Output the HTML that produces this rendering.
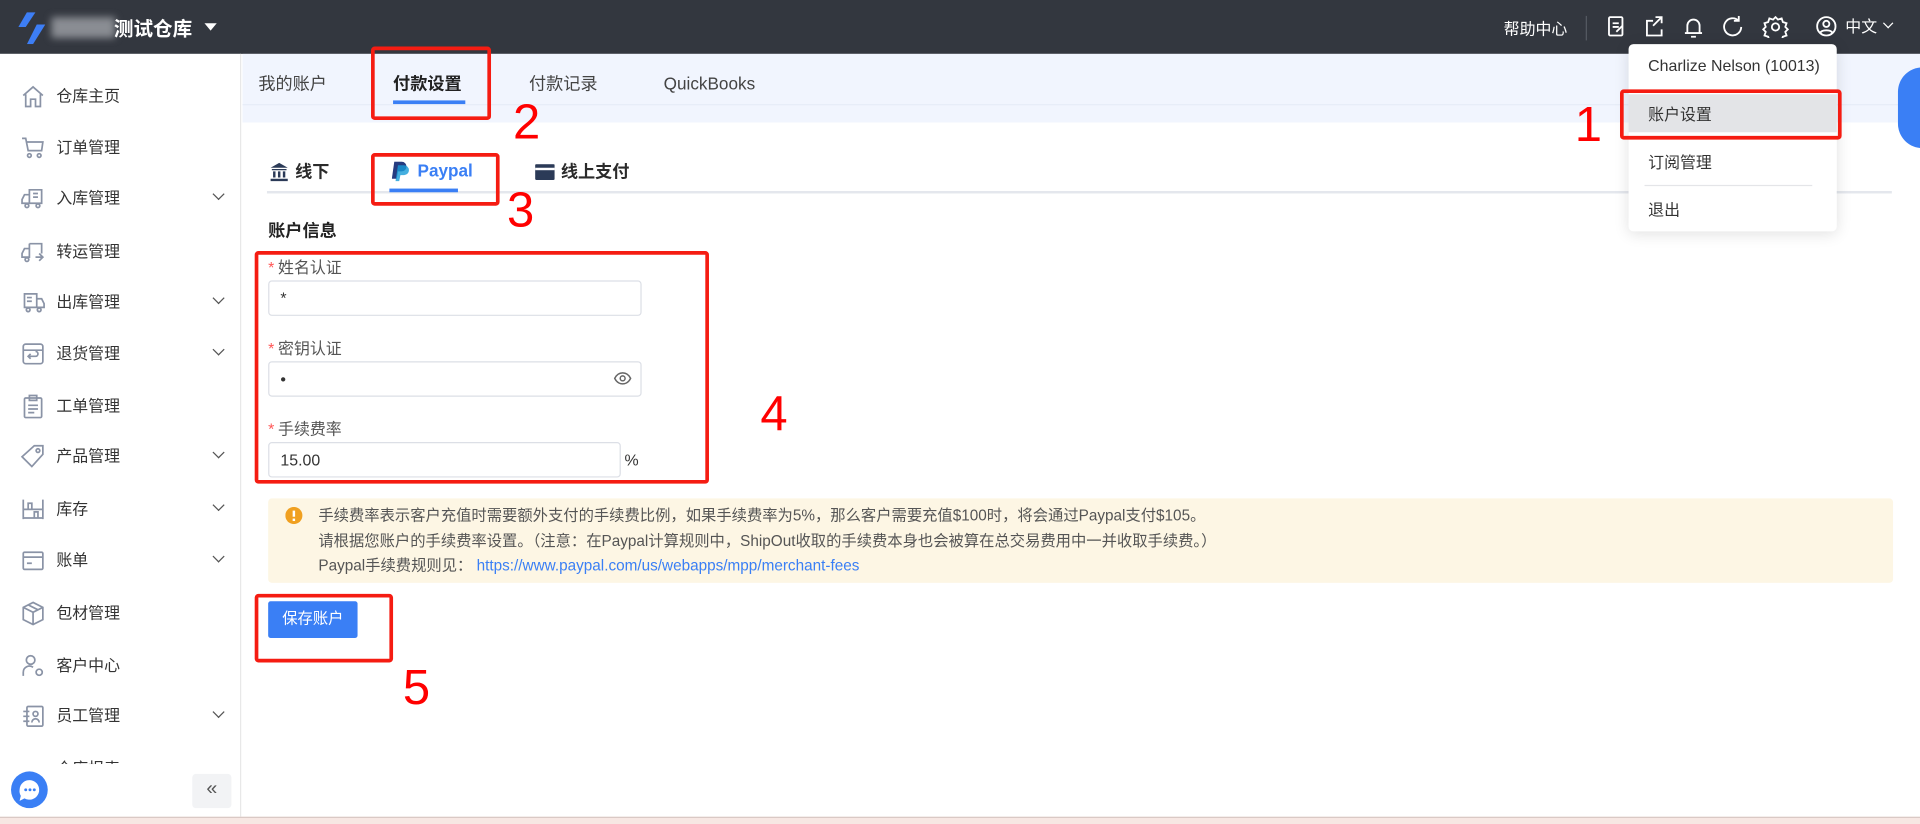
<!DOCTYPE html>
<html><head><meta charset="utf-8"><style>
*{box-sizing:border-box;margin:0;padding:0}
html,body{width:1920px;height:824px;overflow:hidden;background:#fff}
#w{position:absolute;left:0;top:0;width:1568px;height:673px;transform:scale(1.22449);transform-origin:0 0;font-family:"Liberation Sans","Noto Sans CJK SC",sans-serif;color:#333;font-size:13px}
.a{position:absolute}
.hdr{left:0;top:0;width:1568px;height:44px;background:#33373f}
.side{left:0;top:44px;width:197px;height:623px;border-right:1px solid #e8e8e8;background:#fff}
.mi{position:absolute;left:0;width:197px;height:20px;line-height:20px}
.mi span{position:absolute;left:46px;font-size:13px;color:#333}
.mi svg{position:absolute;left:17px;top:0}
.mi i{position:absolute;left:175px;top:3px;width:7px;height:7px;border-right:1.3px solid #555;border-bottom:1.3px solid #555;transform:rotate(45deg)}
.red{position:absolute;border:3px solid #f51c12;border-radius:3px}
.num{position:absolute;color:#f00;font-size:40px;font-family:"Liberation Sans",sans-serif;line-height:1}
.lbl{position:absolute;left:219px;font-size:13px;color:#555}
.lbl b{color:#f55;font-weight:normal;margin-right:3px}
.inp{position:absolute;left:219px;border:1px solid #dcdfe6;border-radius:3px;height:29px;line-height:27px;padding-left:9px;font-size:13px;color:#333}
.dd div{position:absolute;left:16px;font-size:13px;color:#333}
</style></head><body><div id="w">
<div class="a hdr">
 <svg class="a" style="left:15px;top:10px" width="22" height="26" viewBox="0 0 22 26"><path d="M7 0h7L6 12H0z" fill="#3d7ef5"/><path d="M15 10h7L12 26H7z" fill="#3d7ef5"/></svg>
 <div class="a" style="left:42px;top:14px;width:52px;height:17px;background:#8a8d93;filter:blur(3px)"></div>
 <div class="a" style="left:93px;top:10px;color:#fff;font-size:16px;font-weight:bold">测试仓库</div>
 <div class="a" style="left:167px;top:19px;width:0;height:0;border-left:5px solid transparent;border-right:5px solid transparent;border-top:6px solid #fff"></div>
 <div class="a" style="left:1228px;top:13px;color:#fff;font-size:13px">帮助中心</div>
 <div class="a" style="left:1295px;top:13px;width:1px;height:20px;background:#555a63"></div>
 <svg class="a" style="left:1312px;top:13px" width="160" height="18" viewBox="0 0 160 18" fill="none" stroke="#fff" stroke-width="1.5">
  <rect x="2" y="1" width="11" height="15" rx="1"/><path d="M5 6h5M5 9h5M8 13l5-5"/>
  <path d="M38 4h-5v12h12v-5M40 1h5v5M45 1l-7 7"/>
  <path d="M66 14V8a5 5 0 0 1 10 0v6zM64 14h14M69 17h4"/>
  <path d="M108 4a7 7 0 1 0 2 5M108 0v4h-4"/>
  <circle cx="138" cy="9" r="3"/><path d="M138 1l2 2 3-1 1 3 3 1-1 3 2 2-2 2 1 3-3 1-1 3-3-1-2 2-2-2-3 1-1-3-3-1 1-3-2-2 2-2-1-3 3-1 1-3 3 1z"/>
 </svg>
 <svg class="a" style="left:1483px;top:13px" width="17" height="17" viewBox="0 0 17 17" fill="none" stroke="#fff" stroke-width="1.5"><circle cx="8.5" cy="8.5" r="7.5"/><circle cx="8.5" cy="6.5" r="2.5"/><path d="M3.5 14c1-3 9-3 10 0"/></svg>
 <div class="a" style="left:1507px;top:11px;color:#fff;font-size:13px">中文</div>
 <div class="a" style="left:1539px;top:16px;width:6px;height:6px;border-right:1.3px solid #fff;border-bottom:1.3px solid #fff;transform:rotate(45deg)"></div>
</div>
<div class="a side">
 <div class="mi" style="top:25px"><svg width="20" height="20" viewBox="0 0 20 20" fill="none" stroke="#8a93a6" stroke-width="1.4"><path d="M2 9L10 2l8 7M4 8v10h4v-6h4v6h4V8"/></svg><span>仓库主页</span></div>
 <div class="mi" style="top:67px"><svg width="20" height="20" viewBox="0 0 20 20" fill="none" stroke="#8a93a6" stroke-width="1.4"><path d="M1 2h3l2 10h11l1-7H5"/><circle cx="7" cy="16" r="1.5"/><circle cx="15" cy="16" r="1.5"/></svg><span>订单管理</span></div>
 <div class="mi" style="top:108px"><svg width="20" height="20" viewBox="0 0 20 20" fill="none" stroke="#8a93a6" stroke-width="1.4"><path d="M7 3h10v11H7zM7 7H3l-2 4v3h6M10 6h4M10 9h4"/><circle cx="5" cy="16" r="1.5"/><circle cx="14" cy="16" r="1.5"/></svg><span>入库管理</span><i></i></div>
 <div class="mi" style="top:152px"><svg width="20" height="20" viewBox="0 0 20 20" fill="none" stroke="#8a93a6" stroke-width="1.4"><path d="M7 3h10v8M7 7H3l-2 4v3h6V3M12 14h6M15 11l3 3-3 3"/><circle cx="5" cy="16" r="1.5"/></svg><span>转运管理</span></div>
 <div class="mi" style="top:193px"><svg width="20" height="20" viewBox="0 0 20 20" fill="none" stroke="#8a93a6" stroke-width="1.4"><path d="M3 3h10v11H3zM13 7h4l2 4v3h-6M5 6h4M5 9h4"/><circle cx="6" cy="16" r="1.5"/><circle cx="15" cy="16" r="1.5"/></svg><span>出库管理</span><i></i></div>
 <div class="mi" style="top:235px"><svg width="20" height="20" viewBox="0 0 20 20" fill="none" stroke="#8a93a6" stroke-width="1.4"><rect x="2" y="2" width="16" height="16" rx="2"/><path d="M2 7h16M8 10l-2 2 2 2M6 12h6a2 2 0 0 0 0-4"/></svg><span>退货管理</span><i></i></div>
 <div class="mi" style="top:278px"><svg width="20" height="20" viewBox="0 0 20 20" fill="none" stroke="#8a93a6" stroke-width="1.4"><rect x="3" y="3" width="14" height="16" rx="1"/><path d="M7 1h6v4H7zM6 9h8M6 12h8M6 15h5"/></svg><span>工单管理</span></div>
 <div class="mi" style="top:319px"><svg width="20" height="20" viewBox="0 0 20 20" fill="none" stroke="#8a93a6" stroke-width="1.4"><path d="M11 1h7v7L9 18 1 10z"/><circle cx="14" cy="5" r="1.5"/></svg><span>产品管理</span><i></i></div>
 <div class="mi" style="top:362px"><svg width="20" height="20" viewBox="0 0 20 20" fill="none" stroke="#8a93a6" stroke-width="1.4"><path d="M2 2v16M18 2v16M2 10h16M2 17h16M6 5h3v5H6zM11 12h3v5h-3z"/></svg><span>库存</span><i></i></div>
 <div class="mi" style="top:404px"><svg width="20" height="20" viewBox="0 0 20 20" fill="none" stroke="#8a93a6" stroke-width="1.4"><rect x="2" y="3" width="16" height="14" rx="1"/><path d="M2 7h16M5 12h4"/></svg><span>账单</span><i></i></div>
 <div class="mi" style="top:447px"><svg width="20" height="20" viewBox="0 0 20 20" fill="none" stroke="#8a93a6" stroke-width="1.4"><path d="M10 1l8 4v10l-8 4-8-4V5zM2 5l8 4 8-4M10 9v10M6 3l8 4"/></svg><span>包材管理</span></div>
 <div class="mi" style="top:490px"><svg width="20" height="20" viewBox="0 0 20 20" fill="none" stroke="#8a93a6" stroke-width="1.4"><circle cx="8" cy="5" r="3.5"/><path d="M2 18v-3a5 5 0 0 1 8-4"/><circle cx="15" cy="15" r="2.5"/></svg><span>客户中心</span></div>
 <div class="mi" style="top:531px"><svg width="20" height="20" viewBox="0 0 20 20" fill="none" stroke="#8a93a6" stroke-width="1.4"><rect x="5" y="2" width="13" height="16" rx="1"/><path d="M2 6h5M2 10h5M2 14h5"/><circle cx="12" cy="8" r="2"/><path d="M9 15a3 3 0 0 1 6 0"/></svg><span>员工管理</span><i></i></div>
 <div class="a" style="left:0;top:573px;width:197px;height:7px;overflow:hidden"><div style="position:absolute;top:0;left:46px;font-size:13px">仓库报表</div></div>
 <div class="a" style="left:0;top:580px;width:196px;height:43px;background:#fff"></div>
 <svg class="a" style="left:8px;top:585px" width="32" height="32" viewBox="0 0 32 32"><circle cx="16" cy="16" r="15" fill="#3a7ff5"/><path d="M8 16a8 8 0 1 1 4 7l-4 2 1-4a8 8 0 0 1-1-5z" fill="#fff"/><circle cx="13" cy="16" r="1.2" fill="#3a7ff5"/><circle cx="16.5" cy="16" r="1.2" fill="#3a7ff5"/><circle cx="20" cy="16" r="1.2" fill="#3a7ff5"/></svg>
 <div class="a" style="left:157px;top:588px;width:32px;height:28px;background:#f2f3f5;border-radius:3px;text-align:center;line-height:26px;font-size:16px;color:#555">«</div>
</div>
<div class="a" style="left:0;top:667px;width:1568px;height:6px;background:#f7e7e3;border-top:1px solid #d9c8c4"></div>
<div class="a" style="left:198px;top:44px;width:1370px;height:56px;background:#f1f5fe"></div>
<div class="a" style="left:198px;top:85px;width:1370px;height:1px;background:#e6ecf7"></div>
<div class="a" style="left:211px;top:58px;font-size:14px;color:#444">我的账户</div>
<div class="a" style="left:321px;top:58px;font-size:14px;color:#222;font-weight:bold">付款设置</div>
<div class="a" style="left:321px;top:82px;width:59px;height:3px;background:#3a7ff5"></div>
<div class="a" style="left:432px;top:58px;font-size:14px;color:#444">付款记录</div>
<div class="a" style="left:542px;top:60px;font-size:14px;color:#444">QuickBooks</div>
<div class="red" style="left:303px;top:38px;width:98px;height:60px"></div>
<div class="num" style="left:419px;top:80px">2</div>
<div class="a" style="left:1550px;top:55px;width:40px;height:66px;border-radius:33px;background:#3a7ff5"></div>

<svg class="a" style="left:220px;top:132px" width="16" height="16" viewBox="0 0 16 16" fill="#2b3a57"><path d="M8 1l7 4H1zM2 6h12v1H2zM3 8h2v5H3zM7 8h2v5H7zM11 8h2v5h-2zM1 14h14v2H1z"/></svg>
<div class="a" style="left:241px;top:130px;font-size:14px;font-weight:bold;color:#2b2b2b">线下</div>
<svg class="a" style="left:320px;top:132px" width="14" height="16" viewBox="0 0 14 16"><path d="M2 0h6a4 4 0 0 1 0 8H5l-1 6H0z" fill="#253b80"/><path d="M5 3h5a4 4 0 0 1 0 8H7l-1 5H3z" fill="#179bd7" opacity=".8"/></svg>
<div class="a" style="left:341px;top:131px;font-size:14px;font-weight:bold;color:#3a7ff5">Paypal</div>
<svg class="a" style="left:437px;top:134px" width="16" height="13" viewBox="0 0 16 13"><rect width="16" height="13" rx="1" fill="#2b3a57"/><rect y="3" width="16" height="2" fill="#fff"/></svg>
<div class="a" style="left:458px;top:130px;font-size:14px;font-weight:bold;color:#2b2b2b">线上支付</div>
<div class="a" style="left:218px;top:156px;width:1327px;height:2px;background:#e4e7ed"></div>
<div class="a" style="left:318px;top:154px;width:56px;height:3px;background:#3a7ff5"></div>
<div class="red" style="left:303px;top:125px;width:105px;height:43px"></div>
<div class="num" style="left:414px;top:152px">3</div>

<div class="a" style="left:219px;top:178px;font-size:14px;font-weight:bold;color:#222">账户信息</div>
<div class="lbl" style="top:208px"><b>*</b>姓名认证</div>
<div class="inp" style="top:229px;width:305px">*</div>
<div class="lbl" style="top:274px"><b>*</b>密钥认证</div>
<div class="inp" style="top:295px;width:305px">•</div>
<svg class="a" style="left:501px;top:303px" width="15" height="12" viewBox="0 0 15 12" fill="none" stroke="#666" stroke-width="1.2"><path d="M1 6c3-6 10-6 13 0-3 6-10 6-13 0z"/><circle cx="7.5" cy="6" r="2"/></svg>
<div class="lbl" style="top:340px"><b>*</b>手续费率</div>
<div class="inp" style="top:361px;width:288px">15.00</div>
<div class="a" style="left:510px;top:368px;font-size:13px">%</div>
<div class="red" style="left:208px;top:205px;width:371px;height:190px"></div>
<div class="num" style="left:621px;top:318px">4</div>

<div class="a" style="left:219px;top:407px;width:1327px;height:69px;background:#fdf6e4;border-radius:3px"></div>
<svg class="a" style="left:233px;top:414px" width="14" height="14" viewBox="0 0 14 14"><circle cx="7" cy="7" r="7" fill="#f0a020"/><rect x="6" y="3" width="2" height="5" fill="#fff"/><rect x="6" y="9.5" width="2" height="2" fill="#fff"/></svg>
<div class="a" style="left:260px;top:411px;font-size:12.5px;color:#555;line-height:20.5px">手续费率表示客户充值时需要额外支付的手续费比例，如果手续费率为5%，那么客户需要充值$100时，将会通过Paypal支付$105。<br>请根据您账户的手续费率设置。（注意：在Paypal计算规则中，ShipOut收取的手续费本身也会被算在总交易费用中一并收取手续费。）<br>Paypal手续费规则见： <span style="color:#3a7ff5">https://www.paypal.com/us/webapps/mpp/merchant-fees</span></div>

<div class="a" style="left:219px;top:491px;width:73px;height:30px;background:#3a7ff5;border-radius:2px;color:#fff;font-size:12.5px;text-align:center;line-height:28px">保存账户</div>
<div class="red" style="left:208px;top:485px;width:113px;height:56px"></div>
<div class="num" style="left:329px;top:542px">5</div>

<div class="a dd" style="left:1330px;top:36px;width:170px;height:153px;background:#fff;border-radius:4px;box-shadow:0 2px 12px rgba(0,0,0,.12)">
 <div style="top:10px">Charlize Nelson (10013)</div>
 <div style="left:0;top:41px;width:170px;height:31px;background:#e3e4e7"></div>
 <div style="top:47px">账户设置</div>
 <div style="top:86px">订阅管理</div>
 <div style="left:13px;top:115px;width:137px;height:1px;background:#e4e5e8"></div>
 <div style="top:125px">退出</div>
</div>
<div class="red" style="left:1323px;top:73px;width:181px;height:41px"></div>
<div class="num" style="left:1286px;top:82px">1</div>
</div></body></html>
